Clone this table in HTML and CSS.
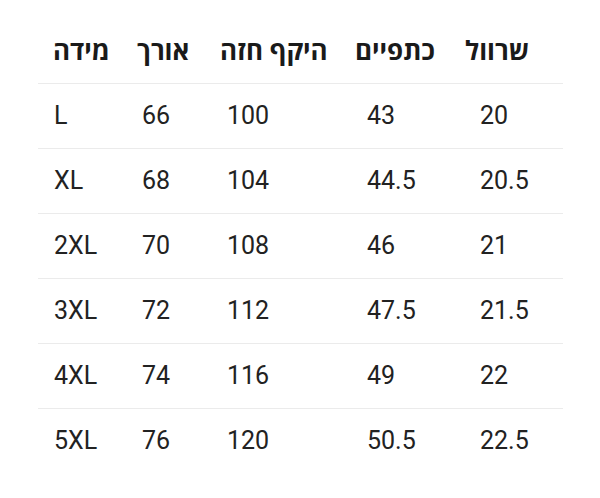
FILE: index.html
```html
<!DOCTYPE html>
<html lang="he">
<head>
<meta charset="utf-8">
<link rel="stylesheet" href="styles.css">
</head>
<body>
<div class="sheet">
  <div class="row head">
    <div class="cell c1">מידה</div>
    <div class="cell c2">אורך</div>
    <div class="cell c3">היקף חזה</div>
    <div class="cell c4">כתפיים</div>
    <div class="cell c5">שרוול</div>
  </div>
  <div class="row">
    <div class="cell c1">L</div><div class="cell c2">66</div><div class="cell c3">100</div><div class="cell c4">43</div><div class="cell c5">20</div>
  </div>
  <div class="row">
    <div class="cell c1">XL</div><div class="cell c2">68</div><div class="cell c3">104</div><div class="cell c4">44.5</div><div class="cell c5">20.5</div>
  </div>
  <div class="row">
    <div class="cell c1">2XL</div><div class="cell c2">70</div><div class="cell c3">108</div><div class="cell c4">46</div><div class="cell c5">21</div>
  </div>
  <div class="row">
    <div class="cell c1">3XL</div><div class="cell c2">72</div><div class="cell c3">112</div><div class="cell c4">47.5</div><div class="cell c5">21.5</div>
  </div>
  <div class="row">
    <div class="cell c1">4XL</div><div class="cell c2">74</div><div class="cell c3">116</div><div class="cell c4">49</div><div class="cell c5">22</div>
  </div>
  <div class="row last">
    <div class="cell c1">5XL</div><div class="cell c2">76</div><div class="cell c3">120</div><div class="cell c4">50.5</div><div class="cell c5">22.5</div>
  </div>
</div>
</body>
</html>
```

FILE: styles.css
```css
html, body {
  margin: 0;
  padding: 0;
  background: #ffffff;
}
body {
  font-family: "Roboto", "Open Sans", "DejaVu Sans", sans-serif;
  color: #222222;
}
.sheet {
  width: 525px;
  margin-left: 38px;
}
.row {
  display: grid;
  grid-template-columns: 84px 83px 135px 110px 113px;
  height: 64px;
  align-items: center;
  border-bottom: 1px solid #ebebeb;
  font-size: 25px;
  line-height: 30px;
}
.row.last {
  border-bottom: none;
}
.row .cell.c1 { padding-left: 16px; }
.row .cell.c2 { padding-left: 20px; }
.row .cell.c3 { padding-left: 22px; }
.row .cell.c4 { padding-left: 27px; }
.row .cell.c5 { padding-left: 30px; }
.row.head {
  height: 83px;
  align-items: start;
  font-family: "Open Sans", "DejaVu Sans", sans-serif;
  font-weight: 700;
  font-size: 26px;
  color: #1a1a1a;
}
.row.head .cell {
  padding-top: 35px;
  direction: rtl;
  text-align: left;
}
.row.head .cell.c1,
.row.head .cell.c2,
.row.head .cell.c3,
.row.head .cell.c4,
.row.head .cell.c5 { padding-left: 15px; }
```
